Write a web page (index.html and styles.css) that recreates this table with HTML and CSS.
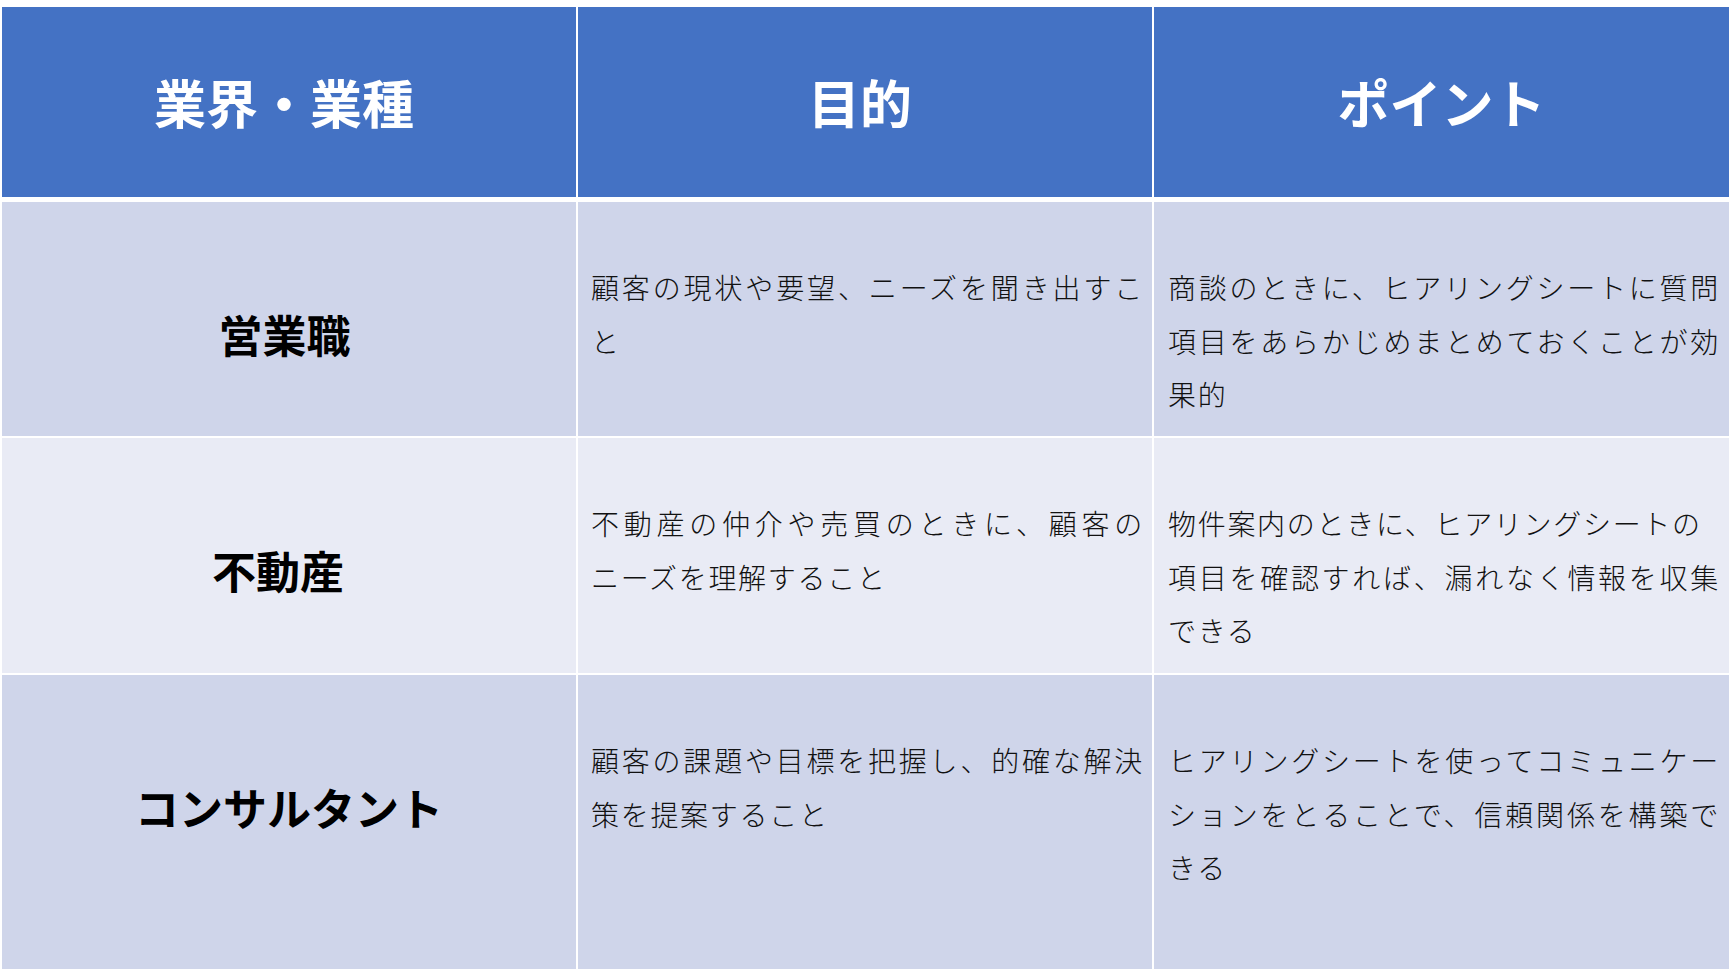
FILE: index.html
```html
<!DOCTYPE html>
<html lang="ja">
<head>
<meta charset="utf-8">
<title>業界・業種別 ヒアリングシートの目的とポイント</title>
<link rel="stylesheet" href="styles.css">
</head>
<body>
<div class="sheet">
  <div class="cell head">業界・業種</div>
  <div class="cell head">目的</div>
  <div class="cell head head-last">ポイント</div>

  <div class="cell label odd shift-a">営業職</div>
  <div class="cell text odd">顧客の現状や要望、ニーズを聞き出すこと</div>
  <div class="cell text odd last">商談のときに、ヒアリングシートに質問項目をあらかじめまとめておくことが効果的</div>

  <div class="cell label even shift-b">不動産</div>
  <div class="cell text even">不動産の仲介や売買のときに、顧客のニーズを理解すること</div>
  <div class="cell text even last">物件案内のときに、ヒアリングシートの<br>項目を確認すれば、漏れなく情報を収集できる</div>

  <div class="cell label odd">コンサルタント</div>
  <div class="cell text odd">顧客の課題や目標を把握し、的確な解決策を提案すること</div>
  <div class="cell text odd last">ヒアリングシートを使ってコミュニケーションをとることで、信頼関係を構築できる</div>
</div>
</body>
</html>
```

FILE: styles.css
```css
html, body {
  margin: 0;
  padding: 0;
  background: #ffffff;
}

body {
  width: 1736px;
  height: 978px;
  overflow: hidden;
  font-family: "Noto Sans CJK JP", "Noto Sans", sans-serif;
}

.sheet {
  display: grid;
  grid-template-columns: 574px 574px 575px;
  grid-template-rows: 193px 234px 235px 294px;
  column-gap: 2px;
  row-gap: 2px;
  margin: 7px 0 0 2px;
  width: 1727px;
}

.cell {
  box-sizing: border-box;
}

.head {
  margin-bottom: 3px;
  padding-right: 10px;
  background: #4472c4;
  color: #ffffff;
  font-weight: 700;
  font-size: 52px;
  display: flex;
  align-items: center;
  justify-content: center;
  line-height: 1;
}

.head-last {
  padding-right: 0;
}

.odd {
  background: #cfd5ea;
}

.even {
  background: #e9ebf5;
}

.label {
  padding-top: 106px;
  text-align: center;
  font-weight: 700;
  font-size: 44px;
  line-height: 53px;
  color: #000000;
}

.shift-a {
  padding-right: 9px;
}

.shift-b {
  padding-right: 22px;
}

.text {
  padding: 59px 8px 0 13px;
  font-weight: 300;
  font-size: 28px;
  line-height: 53.5px;
  letter-spacing: 1.7px;
  color: #111111;
  text-align: justify;
  line-break: strict;
  word-break: normal;
}

.text.last {
  padding-left: 14px;
  padding-right: 9px;
}
```
